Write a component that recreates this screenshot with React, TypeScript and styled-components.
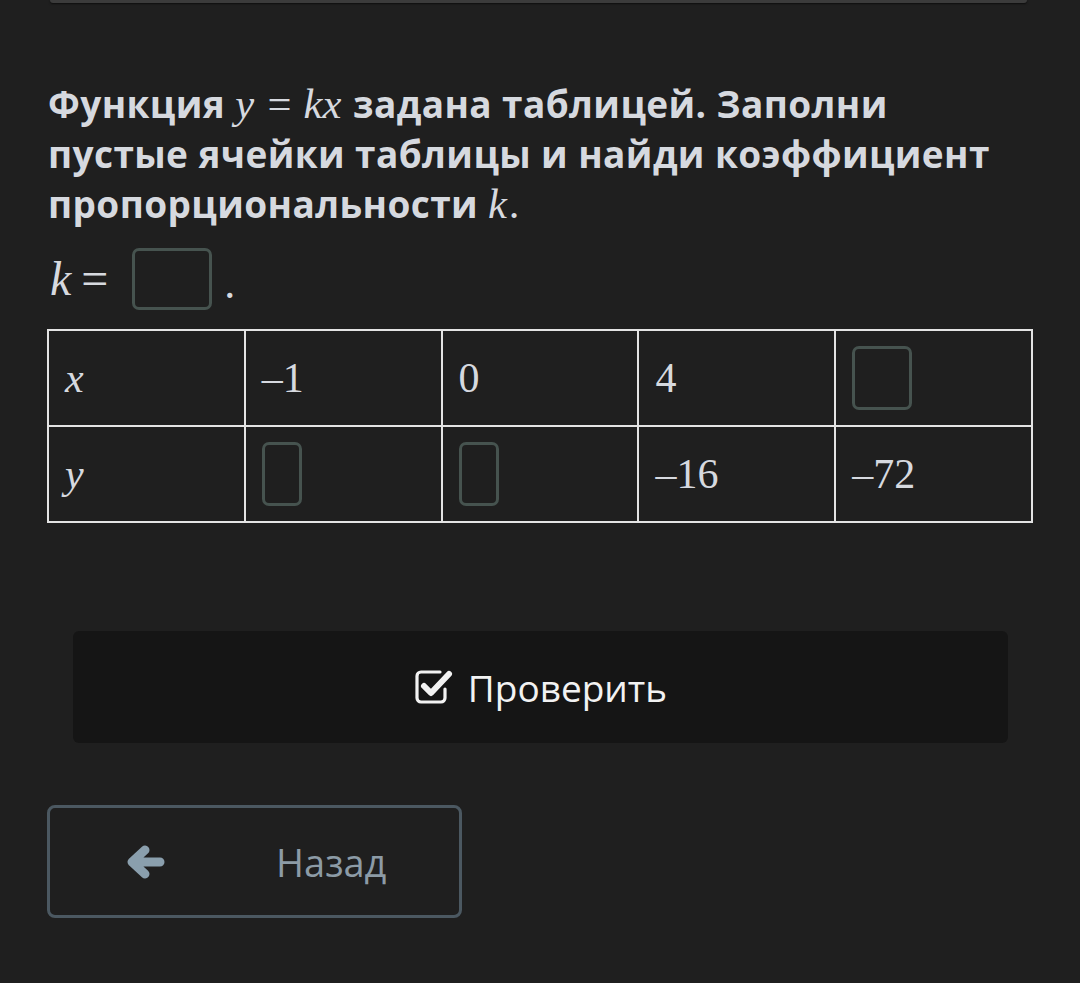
import styled, { createGlobalStyle } from 'styled-components'

const GlobalStyle = createGlobalStyle`
  html, body {
    margin: 0;
    padding: 0;
    background: #1f1f1f;
  }
  body {
    font-family: "Open Sans", "Noto Sans", sans-serif;
    color: #d6d9df;
  }
`

const Page = styled.div`
  width: 1080px;
  min-height: 983px;
  background: #1f1f1f;
  display: flex;
  flex-direction: column;
`

const CardEdge = styled.div`
  margin: 0 53px 0 50px;
  height: 3px;
  background: #3b3b3b;
  border-radius: 0 0 6px 6px;
  box-shadow: 0 1px 2px rgba(0, 0, 0, 0.6);
`

const Content = styled.div`
  padding: 0 47px;
  display: flex;
  flex-direction: column;
`

const Question = styled.p`
  margin: 76px 0 0 1px;
  font-size: 37px;
  font-weight: 700;
  line-height: 50px;
  letter-spacing: 0.4px;
  color: #d6d9df;
  max-width: 975px;
`

const MathText = styled.span<{ $size?: number }>`
  font-family: "Liberation Serif", "Times New Roman", serif;
  font-weight: 400;
  font-size: ${(p) => (p.$size ? `${p.$size}px` : '1.15em')};
  letter-spacing: 0;
  line-height: 1;
  white-space: nowrap;
`

const Var = styled.i`
  font-style: italic;
  padding-right: 0.04em;
`

const Rel = styled.span<{ $gap?: string }>`
  margin: ${(p) => p.$gap ?? '0 0.28em'};
`

const AnswerRow = styled.div`
  margin-top: 19px;
  display: flex;
  align-items: center;
  height: 62px;
  padding-left: 3px;
`

const InputBox = styled.div<{ $w: number; $h: number }>`
  width: ${(p) => p.$w}px;
  height: ${(p) => p.$h}px;
  box-sizing: border-box;
  border: 3px solid #46534f;
  border-radius: 7px;
  background: #1f1f1f;
`

const Dot = styled.span`
  font-family: "Liberation Serif", serif;
  font-size: 44px;
  margin-left: 12px;
  align-self: flex-end;
  line-height: 52px;
`

const Table = styled.div`
  margin-top: 19px;
  display: grid;
  grid-template-columns: repeat(5, 1fr);
  width: 986px;
  box-sizing: border-box;
  border-top: 2px solid #e3e3e3;
  border-left: 2px solid #e3e3e3;
`

const Cell = styled.div`
  height: 96px;
  box-sizing: border-box;
  border-right: 2px solid #e3e3e3;
  border-bottom: 2px solid #e3e3e3;
  padding-left: 16px;
  display: flex;
  align-items: center;
  font-family: "Liberation Serif", "Times New Roman", serif;
  font-size: 42px;
  color: #d6d9df;
`

const CheckButton = styled.button`
  margin: 108px 25px 0 26px;
  height: 112px;
  border: none;
  border-radius: 6px;
  background: #151515;
  color: #f2f2f2;
  font-family: "Open Sans", "Noto Sans", sans-serif;
  font-size: 37px;
  display: flex;
  align-items: center;
  justify-content: center;
  gap: 14px;
  padding: 0;
`

const BackButton = styled.button`
  margin-top: 62px;
  width: 415px;
  height: 113px;
  box-sizing: border-box;
  border: 3px solid #4b5861;
  border-radius: 8px;
  background: transparent;
  color: #8c9ba6;
  font-family: "Open Sans", "Noto Sans", sans-serif;
  font-size: 38px;
  display: flex;
  align-items: center;
  padding: 0 0 0 77px;
`

const BackLabel = styled.span`
  margin-left: 111px;
`

function CheckIcon() {
  return (
    <svg width="40" height="36" viewBox="0 0 40 36" fill="none">
      <path
        d="M26 3 H7 A4 4 0 0 0 3 7 V29 A4 4 0 0 0 7 33 H27 A4 4 0 0 0 31 29 V20"
        stroke="#f2f2f2"
        strokeWidth="3.2"
        strokeLinecap="round"
      />
      <path
        d="M10 17 L17 24 L35 5"
        stroke="#f2f2f2"
        strokeWidth="6"
        strokeLinecap="round"
        strokeLinejoin="round"
      />
    </svg>
  )
}

function ArrowIcon() {
  return (
    <svg width="38" height="34" viewBox="0 0 38 34" fill="none">
      <path
        d="M33 17 H8 M18 5 L5 17 L18 29"
        stroke="#8a9fad"
        strokeWidth="9"
        strokeLinecap="round"
        strokeLinejoin="round"
      />
    </svg>
  )
}

export default function App() {
  return (
    <Page>
      <GlobalStyle />
      <CardEdge />
      <Content>
        <Question>
          Функция{' '}
          <MathText>
            <Var>y</Var>
            <Rel>=</Rel>
            <Var>kx</Var>
          </MathText>{' '}
          задана таблицей. Заполни пустые ячейки таблицы и найди коэффициент
          пропорциональности{' '}
          <MathText>
            <Var>k</Var>.
          </MathText>
        </Question>

        <AnswerRow>
          <MathText $size={48}>
            <Var>k</Var>
            <Rel $gap="0 24px 0 8px">=</Rel>
          </MathText>
          <InputBox $w={80} $h={62} />
          <Dot>.</Dot>
        </AnswerRow>

        <Table>
          <Cell>
            <Var>x</Var>
          </Cell>
          <Cell>–1</Cell>
          <Cell>0</Cell>
          <Cell>4</Cell>
          <Cell>
            <InputBox $w={60} $h={64} />
          </Cell>
          <Cell>
            <Var>y</Var>
          </Cell>
          <Cell>
            <InputBox $w={40} $h={64} />
          </Cell>
          <Cell>
            <InputBox $w={40} $h={64} />
          </Cell>
          <Cell>–16</Cell>
          <Cell>–72</Cell>
        </Table>

        <CheckButton>
          <CheckIcon />
          Проверить
        </CheckButton>

        <BackButton>
          <ArrowIcon />
          <BackLabel>Назад</BackLabel>
        </BackButton>
      </Content>
    </Page>
  )
}
